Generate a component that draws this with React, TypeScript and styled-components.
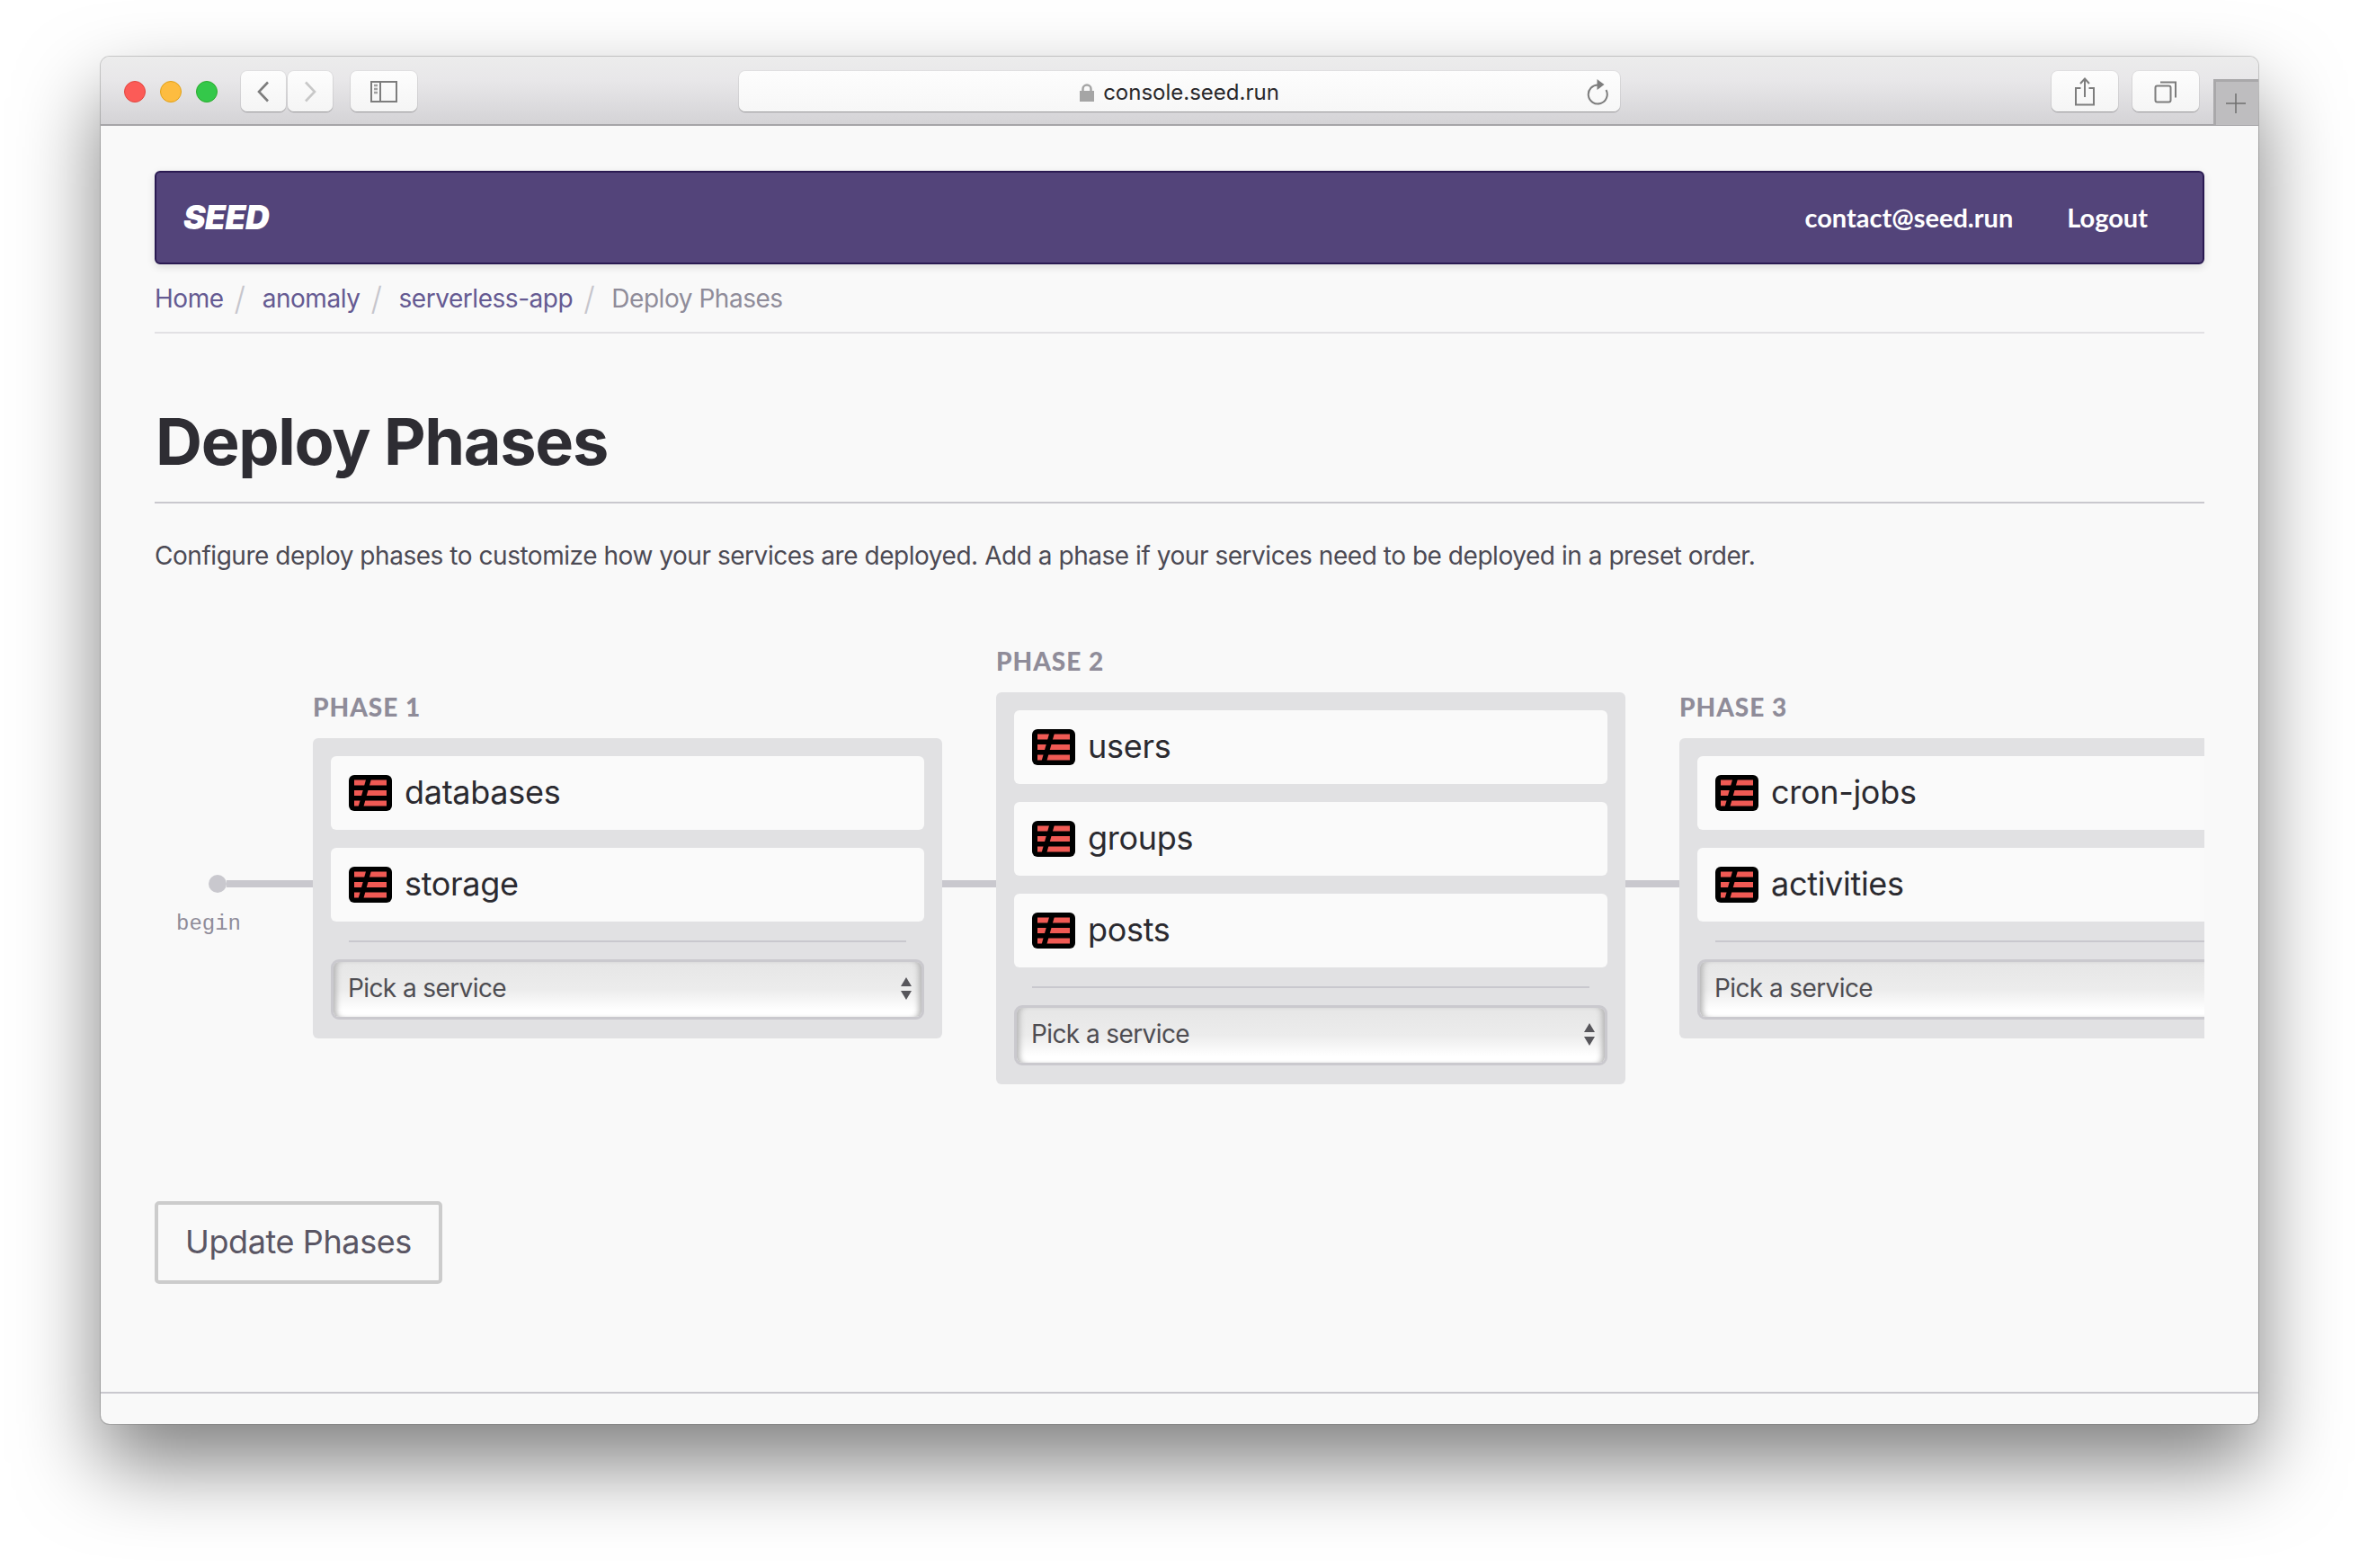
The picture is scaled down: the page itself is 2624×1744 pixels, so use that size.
import React from 'react'
import styled, { createGlobalStyle } from 'styled-components'

const GlobalStyle = createGlobalStyle`
html, body {
    margin: 0;
    padding: 0;
    background: #ffffff;
}
* {
    box-sizing: border-box;
}
`

//#region : browser chrome
const Page = styled.div`
width: 2624px;
height: 1744px;
padding: 63px 112px 0;
overflow: hidden;
font-family: Inter, "Liberation Sans", sans-serif;
`

const BrowserWindow = styled.div`
width: 2400px;
height: 1521px;
border-radius: 10px;
background: #f9f9f9;
display: flex;
flex-direction: column;
box-shadow: 0 0 0 1px rgba(0, 0, 0, 0.18), 0 44px 90px rgba(0, 0, 0, 0.5);
`

const TitleBar = styled.div`
height: 77px;
flex-shrink: 0;
display: flex;
align-items: flex-start;
padding: 16px 0 0 26px;
border-bottom: 2px solid #a6a5a8;
border-radius: 10px 10px 0 0;
background: linear-gradient(#ececec, #e8e7e9 35%, #d4d3d6);
`

const Lights = styled.div`
display: flex;
gap: 16px;
padding-top: 11px;
margin-right: 26px;
`

const Light = styled.span<{ $color: string; $edge: string }>`
width: 24px;
height: 24px;
border-radius: 50%;
background: ${({ $color }) => $color};
border: 1px solid ${({ $edge }) => $edge};
`

const ChromeButton = styled.div<{ $width: number; $left?: number }>`
width: ${({ $width }) => $width}px;
height: 45px;
margin-left: ${({ $left }) => $left ?? 0}px;
flex-shrink: 0;
display: flex;
align-items: center;
justify-content: center;
border-radius: 7px;
background: linear-gradient(#fdfdfd, #f5f5f5);
box-shadow: 0 1px 1px rgba(0, 0, 0, 0.28), 0 0 0 1px rgba(0, 0, 0, 0.04);
`

const UrlBar = styled.div`
width: 980px;
height: 45px;
margin-left: 358px;
flex-shrink: 0;
position: relative;
display: flex;
align-items: center;
justify-content: center;
gap: 10px;
padding-top: 2px;
border-radius: 7px;
background: linear-gradient(#fdfdfd, #f7f7f7);
box-shadow: 0 1px 1px rgba(0, 0, 0, 0.28), 0 0 0 1px rgba(0, 0, 0, 0.04);
font-size: 24px;
color: #29282b;
`

const ReloadIcon = styled.svg`
position: absolute;
right: 13px;
top: 8px;
`

const NewTab = styled.div`
width: 50px;
height: 51px;
margin-left: 16px;
margin-top: 9px;
padding-right: 3px;
display: flex;
align-items: center;
justify-content: center;
background: #bebdbf;
border-top: 3px solid #a9a8aa;
border-left: 3px solid #a9a8aa;
`
//#endregion

//#region : seed page
const Content = styled.div`
flex: 1;
min-height: 0;
padding: 50px 60px 0 60px;
display: flex;
flex-direction: column;
font-size: 28px;
letter-spacing: -0.46px;
`

const NavBar = styled.div`
height: 104px;
flex-shrink: 0;
display: flex;
align-items: center;
justify-content: space-between;
padding: 0 61px 0 30px;
background: #53447a;
border: 2px solid #2a1a52;
border-radius: 6px;
box-shadow: 0 3px 10px rgba(0, 0, 0, 0.12);
color: #ffffff;
letter-spacing: 0;
`

const Logo = styled.div`
padding-bottom: 2px;
font-size: 37px;
font-weight: 900;
font-style: italic;
letter-spacing: -0.6px;
`

const NavLinks = styled.div`
display: flex;
gap: 60px;
padding-bottom: 1px;
font-family: Lato, sans-serif;
font-size: 29px;
font-weight: 700;
`

const Breadcrumb = styled.div`
height: 77px;
flex-shrink: 0;
display: flex;
align-items: center;
border-bottom: 2px solid #e2e1e4;
`

const Crumb = styled.span<{ $active?: boolean }>`
color: ${({ $active }) => ($active ? '#8f8c99' : '#655a92')};
`

const Slash = styled.span`
color: #c6c5cc;
font-size: 36px;
font-weight: 300;
margin: 0 19px 0 12px;
`

const Title = styled.h1`
margin: 0;
height: 189px;
flex-shrink: 0;
display: flex;
align-items: flex-end;
padding: 0 0 31px 1px;
border-bottom: 2px solid #c9c8ce;
font-size: 72px;
font-weight: 700;
line-height: 1;
letter-spacing: -1.3px;
color: #2e2d33;
`

const Intro = styled.p`
margin: 40px 0 0;
line-height: 36px;
color: #4c4a54;
`

const Phases = styled.div`
margin-top: 80px;
padding-top: 4px;
display: flex;
align-items: center;
overflow: hidden;
flex-shrink: 0;
letter-spacing: 0;
`

const Begin = styled.div`
width: 176px;
flex-shrink: 0;
margin-top: 91px;
display: flex;
flex-direction: column;
`

const BeginTrack = styled.div`
display: flex;
align-items: center;
padding-left: 60px;
`

const BeginDot = styled.span`
width: 20px;
height: 20px;
flex-shrink: 0;
border-radius: 50%;
background: #c9c8ce;
`

const BeginLine = styled.span`
flex: 1;
height: 8px;
background: #c9c8ce;
`

const BeginLabel = styled.span`
margin: 18px 0 0 24px;
font-family: "Liberation Mono", monospace;
font-size: 24px;
line-height: 33px;
color: #8f8c99;
`

const Connector = styled.div`
width: 60px;
height: 8px;
flex-shrink: 0;
margin-top: 40px;
background: #c9c8ce;
`

const Phase = styled.div`
width: 700px;
flex-shrink: 0;
`

const PhaseLabel = styled.div`
height: 50px;
font-family: Lato, sans-serif;
font-size: 28px;
font-weight: 900;
line-height: 30px;
letter-spacing: 1px;
color: #8f8c99;
`

const PhaseBox = styled.div`
display: flex;
flex-direction: column;
padding: 20px 20px 21px;
border-radius: 6px;
background: #e1e1e3;
`

const ServiceCard = styled.div`
height: 82px;
margin-bottom: 20px;
display: flex;
align-items: center;
gap: 14px;
padding: 0 20px;
border-radius: 6px;
background: #fafafa;
font-size: 36px;
letter-spacing: -0.3px;
color: #2b2a30;
`

const ServiceName = styled.span`
padding-bottom: 3px;
`

const Divider = styled.div`
height: 2px;
margin: 1px 20px 19px;
background: #c9c8ce;
`

const SelectWrap = styled.div`
position: relative;
height: 67px;
`

const ServiceSelect = styled.select`
appearance: none;
width: 100%;
height: 100%;
padding: 0 0 3px 16px;
border: 3px solid #cac9ce;
border-radius: 9px;
outline: none;
background: linear-gradient(#e6e6e6, #ececec 50%, #ffffff 88%);
box-shadow: inset 7px 0 6px -4px #b4b4b4, inset -7px 0 6px -4px #b4b4b4;
font-family: Inter, "Liberation Sans", sans-serif;
font-size: 28px;
letter-spacing: -0.6px;
color: #4e4d52;
`

const SelectArrows = styled.svg`
position: absolute;
right: 13px;
top: 20px;
pointer-events: none;
`

const UpdateButton = styled.button`
width: 320px;
height: 92px;
margin-top: 130px;
flex-shrink: 0;
padding: 0 0 3px;
background: transparent;
border: 4px solid #cccccc;
border-radius: 5px;
font-family: Inter, "Liberation Sans", sans-serif;
font-size: 36px;
letter-spacing: -0.4px;
color: #5a5664;
`

const Footer = styled.div`
margin: 120px -60px 0;
height: 2px;
background: #c9c8ce;
`
//#endregion

const ServiceIcon = () => (
    <svg width="48" height="40" viewBox="0 0 48 40" style={{ flexShrink: 0 }}>
        <rect width="48" height="40" rx="6" fill="#000" />
        <rect x="6" y="5.5" width="36" height="6" fill="#f05a54" />
        <rect x="6" y="17" width="36" height="6" fill="#f05a54" />
        <rect x="6" y="28.5" width="36" height="6" fill="#f05a54" />
        <line x1="22.5" y1="3" x2="13" y2="37" stroke="#000" strokeWidth="5.5" />
    </svg>
)

type PhaseData = { label: string, services: string[] }

const phases: PhaseData[] = [
    { label: 'PHASE 1', services: ['databases', 'storage'] },
    { label: 'PHASE 2', services: ['users', 'groups', 'posts'] },
    { label: 'PHASE 3', services: ['cron-jobs', 'activities'] },
]

const App = () => {
    return (
        <Page>
            <GlobalStyle />
            <BrowserWindow>
                <TitleBar>
                    <Lights>
                        <Light $color="#fc5b57" $edge="#e2463f" />
                        <Light $color="#fdbc40" $edge="#e1a116" />
                        <Light $color="#34c84a" $edge="#2aac2c" />
                    </Lights>
                    <ChromeButton $width={50}>
                        <svg width="16" height="24" viewBox="0 0 16 24" fill="none" stroke="#7d7d7d" strokeWidth="2.6">
                            <path d="M13 1.5 3 12l10 10.500" />
                        </svg>
                    </ChromeButton>
                    <ChromeButton $width={50} $left={2}>
                        <svg width="16" height="24" viewBox="0 0 16 24" fill="none" stroke="#c8c8c8" strokeWidth="2.6">
                            <path d="M3 1.5 13 12 3 22.500" />
                        </svg>
                    </ChromeButton>
                    <ChromeButton $width={74} $left={20}>
                        <svg width="30" height="24" viewBox="0 0 30 24" fill="none" stroke="#7d7d7d" strokeWidth="2">
                            <rect x="1" y="1" width="28" height="22" />
                            <line x1="11" y1="1" x2="11" y2="23" />
                            <path d="M4 5h4M4 9h4M4 13h4" strokeWidth="2.500" stroke="#a0a0a0" />
                        </svg>
                    </ChromeButton>
                    <UrlBar>
                        <svg width="16" height="20" viewBox="0 0 16 20">
                            <path d="M3.500 9V6a4.500 4.500 0 0 1 9 0v3" fill="none" stroke="#a5a5a5" strokeWidth="2.500" />
                            <rect y="8" width="16" height="12" fill="#a5a5a5" />
                        </svg>
                        console.seed.run
                        <ReloadIcon width="26" height="30" viewBox="0 0 26 30" fill="none" stroke="#7d7d7d" strokeWidth="2">
                            <path d="M15 7.500a10.500 10.500 0 1 0 8.500 5.500" />
                            <path d="M13.500 1v12l8-6z" fill="#7d7d7d" stroke="none" />
                        </ReloadIcon>
                    </UrlBar>
                    <ChromeButton $width={74} $left={480}>
                        <svg width="24" height="32" viewBox="0 0 24 32" fill="none" stroke="#7d7d7d" strokeWidth="2">
                            <path d="M7.500 12H2v18.500h20V12h-5.500" />
                            <path d="M12 22V2M7 7l5-5.500L17 7" />
                        </svg>
                    </ChromeButton>
                    <ChromeButton $width={74} $left={16}>
                        <svg width="26" height="26" viewBox="0 0 26 26" fill="none" stroke="#7d7d7d" strokeWidth="2">
                            <rect x="1.500" y="6.500" width="17" height="18" rx="2" />
                            <path d="M7 2.500h17v17" />
                        </svg>
                    </ChromeButton>
                    <NewTab>
                        <svg width="24" height="24" viewBox="0 0 24 24" stroke="#6f6f6f" strokeWidth="1.500">
                            <path d="M12 1v22M1 12h22" />
                        </svg>
                    </NewTab>
                </TitleBar>
                <Content>
                    <NavBar>
                        <Logo>SEED</Logo>
                        <NavLinks>
                            <span>contact@seed.run</span>
                            <span>Logout</span>
                        </NavLinks>
                    </NavBar>
                    <Breadcrumb>
                        <Crumb>Home</Crumb><Slash>/</Slash>
                        <Crumb>anomaly</Crumb><Slash>/</Slash>
                        <Crumb>serverless-app</Crumb><Slash>/</Slash>
                        <Crumb $active>Deploy Phases</Crumb>
                    </Breadcrumb>
                    <Title>Deploy Phases</Title>
                    <Intro>Configure deploy phases to customize how your services are deployed. Add a phase if your services need to be deployed in a preset order.</Intro>
                    <Phases>
                        <Begin>
                            <BeginTrack>
                                <BeginDot />
                                <BeginLine />
                            </BeginTrack>
                            <BeginLabel>begin</BeginLabel>
                        </Begin>
                        {phases.map((phase, i) => (
                            <React.Fragment key={phase.label}>
                                {i > 0 && <Connector />}
                                <Phase>
                                    <PhaseLabel>{phase.label}</PhaseLabel>
                                    <PhaseBox>
                                        {phase.services.map(service => (
                                            <ServiceCard key={service}>
                                                <ServiceIcon />
                                                <ServiceName>{service}</ServiceName>
                                            </ServiceCard>
                                        ))}
                                        <Divider />
                                        <SelectWrap>
                                            <ServiceSelect defaultValue="">
                                                <option value="">Pick a service</option>
                                            </ServiceSelect>
                                            <SelectArrows width="14" height="25" viewBox="0 0 14 25" fill="#57565b">
                                                <path d="M7 0l6 10H1zM7 25l-6-10h12z" />
                                            </SelectArrows>
                                        </SelectWrap>
                                    </PhaseBox>
                                </Phase>
                            </React.Fragment>
                        ))}
                    </Phases>
                    <UpdateButton>Update Phases</UpdateButton>
                    <Footer />
                </Content>
            </BrowserWindow>
        </Page>
    )
}

export default App
